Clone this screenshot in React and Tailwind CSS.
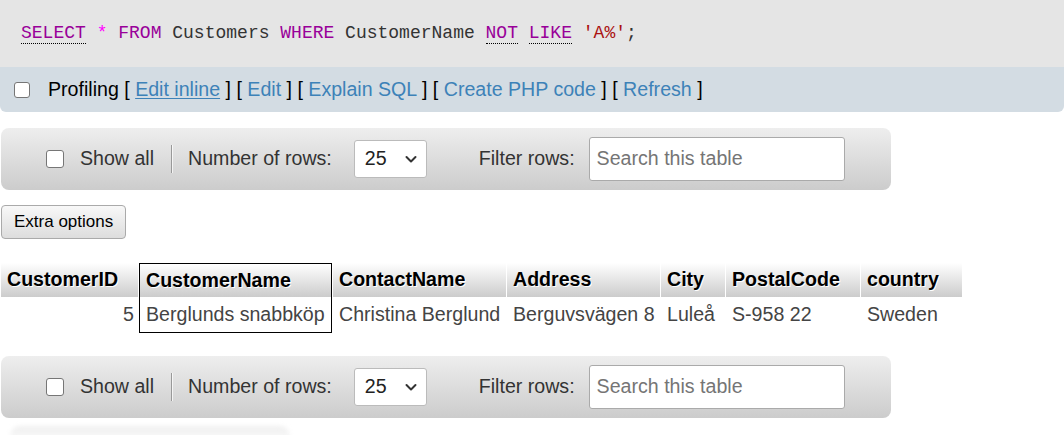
import React from 'react';

const sans = { fontFamily: '"Liberation Sans", Arial, sans-serif' };

const Checkbox = ({ size = 'w-[18px] h-[18px]' }) => (
  <span className={`${size} shrink-0 rounded-[3px] border border-[#767676] bg-white`} />
);

const Kw = ({ children, dotted }) => (
  <span className={`text-[#990099] ${dotted ? 'border-b border-dotted border-black' : ''}`}>{children}</span>
);

function Toolbar() {
  return (
    <div className="ml-[1px] flex h-[62px] w-[890px] items-center rounded-lg bg-gradient-to-b from-[#eeeeee] to-[#cccccc] pl-[45px] text-[19.6px] text-[#333]">
      <Checkbox />
      <span className="ml-[16px]">Show all</span>
      <span className="ml-[17px] h-[28px] w-[2px] border-l border-[#999] bg-white/70" />
      <span className="ml-[15px]">Number of rows:</span>
      <div className="ml-[22px] flex h-[38px] w-[73px] items-center justify-between rounded-[3px] border border-[#bbb] bg-white pl-[10px] pr-[8px] text-[#222]">
        <span>25</span>
        <svg width="14" height="14" viewBox="0 0 14 14" fill="none" stroke="#333" strokeWidth="2" strokeLinecap="round" strokeLinejoin="round">
          <path d="M2.5 5l4.5 4.5 4.5-4.5" />
        </svg>
      </div>
      <span className="ml-[52px]">Filter rows:</span>
      <div className="ml-[14px] flex h-[44px] w-[256px] items-center rounded-[3px] border border-[#aaa] bg-white pl-[7px] text-[#757575]">
        Search this table
      </div>
    </div>
  );
}

const cols = [
  { name: 'CustomerID', w: 'w-[137px]', val: '5', right: true },
  { name: 'CustomerName', w: 'w-[193px]', val: 'Berglunds snabbköp', marked: true },
  { name: 'ContactName', w: 'w-[173px]', val: 'Christina Berglund' },
  { name: 'Address', w: 'w-[153px]', val: 'Berguvsvägen 8' },
  { name: 'City', w: 'w-[64px]', val: 'Luleå' },
  { name: 'PostalCode', w: 'w-[134px]', val: 'S-958 22' },
  { name: 'country', w: 'w-[101px]', val: 'Sweden' },
];

export default function App() {
  return (
    <div className="min-h-[435px] w-[1064px] overflow-hidden bg-white" style={sans}>
      {/* query */}
      <div className="flex h-[67px] items-center bg-[#e5e5e5] pl-[21px] text-[18px] text-[#333]" style={{ fontFamily: '"Liberation Mono", "Courier New", monospace' }}>
        <span className="whitespace-pre">
          <Kw dotted>SELECT</Kw> <span className="text-[#ff00ff]">*</span> <Kw>FROM</Kw> Customers <Kw>WHERE</Kw> CustomerName <Kw dotted>NOT</Kw> <Kw dotted>LIKE</Kw> <span className="text-[#aa1111]">'A%'</span>;
        </span>
      </div>

      {/* profiling bar */}
      <div className="flex h-[45px] items-center rounded-b-md bg-[#d3dce3] pl-[14px] text-[19.6px] text-black">
        <Checkbox size="w-[16px] h-[16px]" />
        <span className="ml-[18px] whitespace-pre">
          Profiling [ <span className="text-[#3d82b8] underline underline-offset-2">Edit inline</span> ] [ <span className="text-[#3d82b8]">Edit</span> ] [ <span className="text-[#3d82b8]">Explain SQL</span> ] [ <span className="text-[#3d82b8]">Create PHP code</span> ] [ <span className="text-[#3d82b8]">Refresh</span> ]
        </span>
      </div>

      <div className="mt-[16px]">
        <Toolbar />
      </div>

      <button className="ml-[1px] mt-[15px] flex h-[34px] items-center rounded-[4px] border border-[#aaa] bg-gradient-to-b from-[#f8f8f8] to-[#dddddd] px-[12px] text-[17px] text-black">
        Extra options
      </button>

      <table className="mt-[24px] table-fixed border-separate border-spacing-x-[1px] border-spacing-y-0 text-[19.6px]">
        <thead>
          <tr>
            {cols.map((c) => (
              <th
                key={c.name}
                className={`${c.w} h-[34px] bg-gradient-to-b from-white to-[#cccccc] pl-[6px] text-left font-bold text-black [text-shadow:1px_1px_0_#fff] ${c.marked ? 'border-x border-t border-black' : ''}`}
              >
                {c.name}
              </th>
            ))}
          </tr>
        </thead>
        <tbody>
          <tr>
            {cols.map((c) => (
              <td
                key={c.name}
                className={`h-[36px] text-[#444] ${c.right ? 'pr-[4px] text-right' : 'pl-[6px] text-left'} ${c.marked ? 'border-x border-b border-black' : ''}`}
              >
                {c.val}
              </td>
            ))}
          </tr>
        </tbody>
      </table>

      <div className="mt-[23px]">
        <Toolbar />
      </div>

      <div className="ml-[10px] mt-[8px] h-[20px] w-[280px] rounded-full bg-gradient-to-b from-[#efefef] to-white blur-[2px]" />
    </div>
  );
}
